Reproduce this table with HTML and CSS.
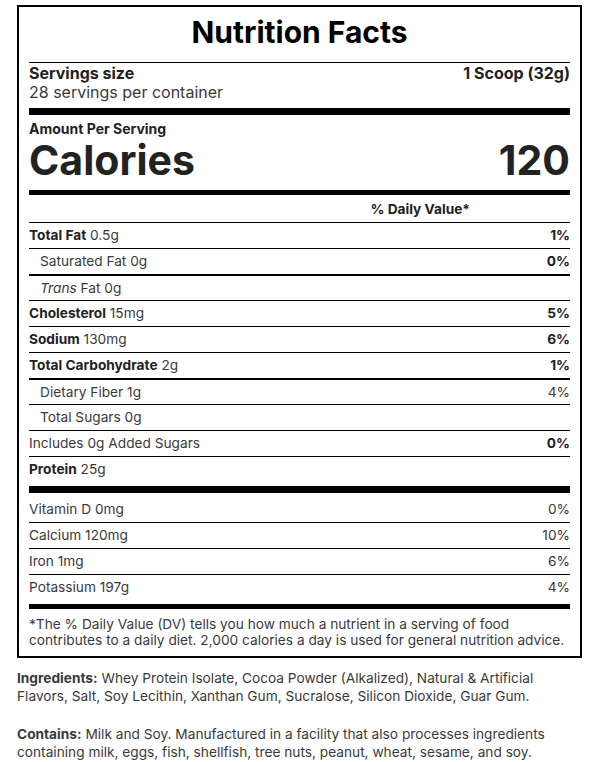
FILE: index.html
```html
<!DOCTYPE html>
<html lang="en">

<head>
  <meta charset="UTF-8">
  <meta name="viewport" content="width=device-width, initial-scale=1.0">
  <title>Nutrition Facts</title>
  <link rel="stylesheet" href="styles.css">
</head>

<body>
  <div class="page">
    <div class="label">
      <h1 class="title">Nutrition Facts</h1>

      <div class="serving">
        <div class="serving-line">
          <b>Servings size</b>
          <b>1 Scoop (32g)</b>
        </div>
        <div>28 servings per container</div>
      </div>

      <div class="bar bar-7"></div>

      <div class="amount">
        <div class="amount-head">Amount Per Serving</div>
        <div class="calories">
          <span>Calories</span>
          <span>120</span>
        </div>
      </div>

      <div class="bar bar-5"></div>

      <div class="dv-head">% Daily Value*</div>

      <div class="row"><span><b>Total Fat</b> 0.5g</span><b>1%</b></div>
      <div class="row sub"><span>Saturated Fat 0g</span><b>0%</b></div>
      <div class="row sub heavy"><span><i>Trans</i> Fat 0g</span></div>
      <div class="row"><span><b>Cholesterol</b> 15mg</span><b>5%</b></div>
      <div class="row"><span><b>Sodium</b> 130mg</span><b>6%</b></div>
      <div class="row"><span><b>Total Carbohydrate</b> 2g</span><b>1%</b></div>
      <div class="row sub heavy"><span>Dietary Fiber 1g</span><span>4%</span></div>
      <div class="row sub"><span>Total Sugars 0g</span></div>
      <div class="row"><span>Includes 0g Added Sugars</span><b>0%</b></div>
      <div class="row"><span><b>Protein</b> 25g</span></div>

      <div class="bar bar-7 gap"></div>

      <div class="row first"><span>Vitamin D 0mg</span><span>0%</span></div>
      <div class="row"><span>Calcium 120mg</span><span>10%</span></div>
      <div class="row"><span>Iron 1mg</span><span>6%</span></div>
      <div class="row"><span>Potassium 197g</span><span>4%</span></div>

      <div class="bar bar-5 gap"></div>

      <p class="note">*The % Daily Value (DV) tells you how much a nutrient in a serving of food contributes to a daily diet. 2,000 calories a day is used for general nutrition advice.</p>
    </div>

    <p class="info"><b>Ingredients:</b> Whey Protein Isolate, Cocoa Powder (Alkalized), Natural &amp; Artificial Flavors, Salt, Soy Lecithin, Xanthan Gum, Sucralose, Silicon Dioxide, Guar Gum.</p>
    <p class="info"><b>Contains:</b> Milk and Soy. Manufactured in a facility that also processes ingredients containing milk, eggs, fish, shellfish, tree nuts, peanut, wheat, sesame, and soy.</p>
  </div>
</body>

</html>
```

FILE: styles.css
```css
html {
  background-color: #fff;
}

body {
  margin: 0;
  font-family: Inter, "Noto Sans", sans-serif;
  font-size: 13.7px;
  color: #3a3a3a;
}

.page {
  width: 565px;
  padding: 5px 0 0 17px;
}

.label {
  border: 2px solid #000;
  padding: 0 10px;
}

.title {
  margin: 0;
  padding-bottom: 4px;
  font-size: 30px;
  line-height: 51px;
  font-weight: 700;
  color: #000;
  text-align: center;
  border-bottom: 1px solid #000;
}

.serving {
  padding: 1px 0 6px;
  font-size: 16px;
  line-height: 19px;
}

.serving-line {
  display: flex;
  justify-content: space-between;
  color: #222;
}

.bar {
  background-color: #000;
}

.bar-7 {
  height: 7px;
}

.bar-5 {
  height: 5px;
}

.bar.gap {
  margin-top: 4px;
}

.amount {
  padding: 5px 0 7px;
  color: #222;
}

.amount-head {
  font-size: 14px;
  line-height: 17px;
  font-weight: 700;
}

.calories {
  display: flex;
  justify-content: space-between;
  font-size: 41px;
  line-height: 46px;
  font-weight: 700;
}

.dv-head {
  display: flex;
  justify-content: flex-end;
  padding: 6px 100px 4px 0;
  line-height: 17px;
  font-weight: 700;
  color: #222;
}

.row {
  display: flex;
  justify-content: space-between;
  border-top: 1px solid #000;
  line-height: 25px;
}

.row b {
  color: #222;
}

.row.sub {
  padding-left: 11px;
}

.row.heavy {
  border-top-width: 2px;
  line-height: 24px;
}

.row.first {
  border-top: none;
  padding-top: 4px;
}

.note {
  margin: 0;
  padding: 7px 0 8px;
  line-height: 16px;
}

.info {
  margin: 11px 0 20px;
  line-height: 18px;
}

.info + .info {
  margin-top: 0;
}
```
